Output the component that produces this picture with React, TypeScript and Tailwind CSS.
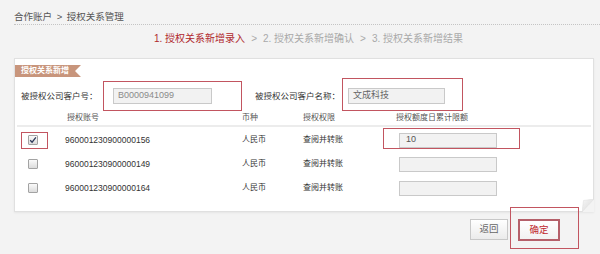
import React from "react";

const font = "font-['Liberation_Sans','Noto_Sans_CJK_SC',sans-serif]";

const rows = [
  { id: "960001230900000156", checked: true, limit: "10" },
  { id: "960001230900000149", checked: false, limit: "" },
  { id: "960001230900000164", checked: false, limit: "" },
];

function Checkbox({ checked }: { checked: boolean }) {
  return (
    <span className="flex h-[10px] w-[10px] items-center justify-center rounded-[1px] border border-[#a3a3a3] bg-gradient-to-b from-[#fafafa] to-[#dcdcdc]">
      {checked && (
        <svg width="8" height="8" viewBox="0 0 8 8">
          <path d="M1.2 4.2 L3.1 6.2 L6.9 1.4" fill="none" stroke="#2d3a5a" strokeWidth="1.3" />
        </svg>
      )}
    </span>
  );
}

function Annot({ className }: { className: string }) {
  return <div className={`pointer-events-none absolute border border-[#c25560] ${className}`} />;
}

export default function App() {
  return (
    <div className={`relative h-[254px] w-[600px] overflow-hidden bg-[#f3f3f3] ${font}`}>
      {/* breadcrumb */}
      <div className="ml-[14px] h-[25px] border-b border-dotted border-[#c4c4c4] pt-[11px] text-[9.5px] leading-[12px] text-[#555]">
        合作账户 <span className="mx-[2px]">&gt;</span> 授权关系管理
      </div>

      {/* steps */}
      <div className="flex h-[33px] pl-[154px] pt-[8px] text-[10px] leading-[12px] text-[#a9a9a9]">
        <span className="text-[#b0282e]">1. 授权关系新增录入</span>
        <span className="mx-[6px]">&gt;</span>
        <span>2. 授权关系新增确认</span>
        <span className="mx-[6px]">&gt;</span>
        <span>3. 授权关系新增结果</span>
      </div>

      {/* panel */}
      <div className="relative ml-[14px] w-[580px] border border-[#e0e0e0] bg-white pb-[11px] shadow-[0_1px_2px_rgba(0,0,0,0.06)]">
        <div className="mt-[6px] flex h-[12px] w-[66px] items-center bg-[#c8957c] pl-[6px] text-[8px] font-bold leading-none text-white [clip-path:polygon(0_0,100%_0,calc(100%-6px)_50%,100%_100%,0_100%)]">
          授权关系新增
        </div>

        <div className="mt-[11px] flex h-[16px] items-center text-[8.5px] text-[#333]">
          <span className="w-[98px] pl-[6px]">被授权公司客户号：</span>
          <div className="flex h-[16px] w-[99px] items-center border border-[#c9c9c9] bg-[#f2f2f2] pl-[4px] text-[9px] text-[#8a8a8a]">
            B0000941099
          </div>
          <span className="ml-[43px] w-[93px]">被授权公司客户名称：</span>
          <div className="flex h-[16px] w-[97px] items-center border border-[#c9c9c9] bg-[#f2f2f2] pl-[4px] text-[9px] text-[#666]">
            文成科技
          </div>
        </div>

        <div className="mx-[2px] flex border-b-2 border-[#ececec] pt-[8px] pb-[1px] text-[8px] leading-[12px] text-[#555]">
          <span className="w-[50px]" />
          <span className="w-[175px]">授权账号</span>
          <span className="w-[61px]">币种</span>
          <span className="w-[93px]">授权权限</span>
          <span>授权额度日累计限额</span>
        </div>

        <div className="mx-[2px] pt-[1px]">
          {rows.map((r) => (
            <div key={r.id} className="flex h-[24px] items-center text-[8px] text-[#333]">
              <span className="flex w-[48px] pl-[11px]">
                <Checkbox checked={r.checked} />
              </span>
              <span className="w-[177px] text-[8.5px]">{r.id}</span>
              <span className="w-[61px]">人民币</span>
              <span className="w-[96px]">查阅并转账</span>
              <div className="flex h-[15px] w-[98px] items-center border border-[#c9c9c9] bg-[#f2f2f2] pl-[6px] text-[9px] text-[#555]">
                {r.limit}
              </div>
            </div>
          ))}
        </div>

        {/* folded corner */}
        <svg className="absolute right-[-1px] bottom-[-1px]" width="12" height="13" viewBox="0 0 12 13">
          <defs>
            <linearGradient id="fold" x1="0" y1="0" x2="1" y2="1">
              <stop offset="0" stopColor="#f7f7f7" />
              <stop offset="1" stopColor="#d6d6d6" />
            </linearGradient>
          </defs>
          <polygon points="12,0 12,13 0,13" fill="#f3f3f3" />
          <polygon points="12,0 0,13 1.5,1.5" fill="url(#fold)" stroke="#dcdcdc" strokeWidth="0.5" />
        </svg>
      </div>

      {/* buttons */}
      <div className="mt-[7px] flex justify-end gap-[10px] pr-[40px] text-[9.5px]">
        <button className="h-[21px] w-[38px] border border-[#c8c8c8] bg-gradient-to-b from-white to-[#ebebeb] text-[#666]">
          返回
        </button>
        <button className="h-[22px] w-[42px] border-2 border-[#b5606a] bg-gradient-to-b from-white to-[#f2f2f2] text-[#c0282e]">
          确定
        </button>
      </div>

      {/* annotation marks */}
      <Annot className="left-[103px] top-[81px] h-[30px] w-[139px]" />
      <Annot className="left-[342px] top-[78px] h-[33px] w-[121px]" />
      <Annot className="left-[21px] top-[132px] h-[17px] w-[27px]" />
      <Annot className="left-[383px] top-[128px] h-[21px] w-[137px]" />
      <Annot className="left-[510px] top-[207px] h-[42px] w-[69px]" />
    </div>
  );
}
